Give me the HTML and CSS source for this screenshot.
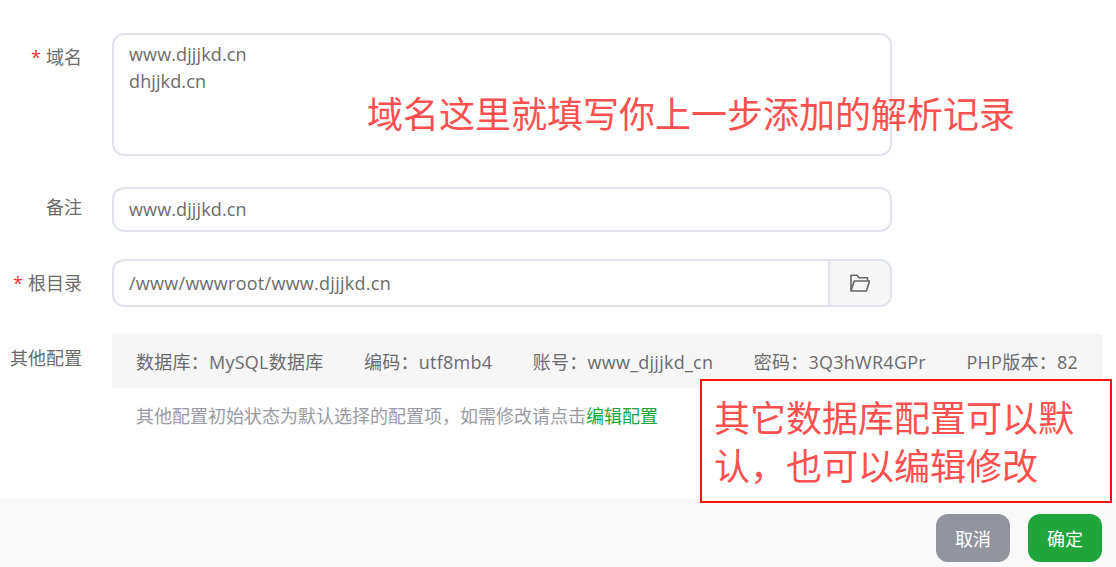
FILE: index.html
```html
<!DOCTYPE html>
<html lang="zh">
<head>
<meta charset="utf-8">
<title>添加站点</title>
<link rel="stylesheet" href="styles.css">
</head>
<body>
<div class="page">
  <form class="form">
    <div class="row row-domain">
      <div class="label label-top"><span class="req">*</span>域名</div>
      <div class="control textarea">www.djjjkd.cn<br>dhjjkd.cn</div>
    </div>
    <div class="row row-note">
      <div class="label label-note">备注</div>
      <div class="control input">www.djjjkd.cn</div>
    </div>
    <div class="row row-root">
      <div class="label label-root"><span class="req">*</span>根目录</div>
      <div class="control group">
        <div class="group-text">/www/wwwroot/www.djjjkd.cn</div>
        <div class="group-btn">
          <svg class="folder" viewBox="0 0 20 18" width="20" height="18" aria-hidden="true">
            <path d="M1 17V1.2h6l2 2.6h8.5V7" fill="none" stroke="#666" stroke-width="1.6" stroke-linejoin="round"/>
            <path d="M1 17h15.5L19.5 7H4.2L1 17z" fill="none" stroke="#666" stroke-width="1.6" stroke-linejoin="round"/>
          </svg>
        </div>
      </div>
    </div>
    <div class="row row-other">
      <div class="label label-other">其他配置</div>
      <div class="other-col">
        <div class="info">
          <span>数据库：MySQL数据库</span>
          <span>编码：utf8mb4</span>
          <span>账号：www_djjjkd_cn</span>
          <span>密码：3Q3hWR4GPr</span>
          <span>PHP版本：82</span>
        </div>
        <p class="hint">其他配置初始状态为默认选择的配置项，如需修改请点击<a class="link">编辑配置</a></p>
      </div>
    </div>
  </form>
  <footer class="footer">
    <button type="button" class="btn btn-cancel">取消</button>
    <button type="button" class="btn btn-ok">确定</button>
  </footer>
  <div class="note-plain">域名这里就填写你上一步添加的解析记录</div>
  <div class="note-box">其它数据库配置可以默认，也可以编辑修改</div>
</div>
</body>
</html>
```
FILE: styles.css
```css
* { box-sizing: border-box; }
html, body { margin: 0; height: 100%; background: #fff; }
body {
  font-family: "Open Sans", "Noto Sans CJK SC", sans-serif;
  font-size: 18px;
  color: #6b6b6b;
  overflow: hidden;
}
.page {
  position: relative;
  width: 1116px;
  height: 567px;
  display: flex;
  flex-direction: column;
  justify-content: space-between;
}
.form {
  display: flex;
  flex-direction: column;
  padding: 33px 14px 0 0;
}
.row { display: flex; }
.row-note { margin-top: 31px; }
.row-root, .row-other { margin-top: 27px; }
.label {
  width: 82px;
  margin-right: 30px;
  flex: none;
  text-align: right;
  line-height: 26px;
  white-space: nowrap;
}
.label-top { padding-top: 11px; }
.label-note { padding-top: 7px; }
.label-root { padding-top: 11px; }
.label-other { padding-top: 11px; }
.req { color: #e33; margin-right: 5px; }
.control {
  width: 780px;
  border: 2px solid #e1e3ea;
  border-radius: 12px;
  background: #fff;
}
.textarea {
  height: 123px;
  padding: 6px 15px;
  line-height: 27px;
  letter-spacing: 0.12px;
}
.input {
  height: 45px;
  padding: 0 15px;
  line-height: 41px;
  letter-spacing: 0.12px;
}
.group { display: flex; height: 48px; }
.group-text { flex: 1; padding: 0 15px; line-height: 44px; letter-spacing: 0.27px; }
.group-btn {
  width: 62px;
  display: flex;
  align-items: center;
  justify-content: center;
  background: #f6f6f7;
  border-left: 2px solid #e1e3ea;
  border-radius: 0 10px 10px 0;
}
.other-col { flex: 1; }
.info {
  height: 54px;
  padding: 0 24px;
  background: #f6f6f7;
  display: flex;
  justify-content: space-between;
  align-items: center;
  white-space: nowrap;
  letter-spacing: 0.25px;
}
.hint {
  margin: 15px 0 0;
  padding-left: 24px;
  color: #999ba3;
  line-height: 26px;
}
.link { color: #20a53a; }
.footer {
  height: 68px;
  padding: 15px 14px 5px 0;
  background: #f9f9f9;
  display: flex;
  justify-content: flex-end;
  gap: 18px;
}
.btn {
  width: 74px;
  height: 48px;
  border: 0;
  border-radius: 12px;
  color: #fff;
  font-family: inherit;
  font-size: 18px;
  padding: 0;
}
.btn-cancel { background: #92959e; }
.btn-ok { background: #20a53a; }
.note-plain {
  position: absolute;
  left: 367px;
  top: 89px;
  font-size: 36px;
  line-height: 52px;
  color: #ff5050;
  white-space: nowrap;
}
.note-box {
  position: absolute;
  left: 700px;
  top: 379px;
  width: 412px;
  height: 124px;
  padding: 14px 12px;
  border: 2px solid #f11;
  background: #fff;
  font-size: 36px;
  line-height: 48px;
  color: #ff5050;
}
```
